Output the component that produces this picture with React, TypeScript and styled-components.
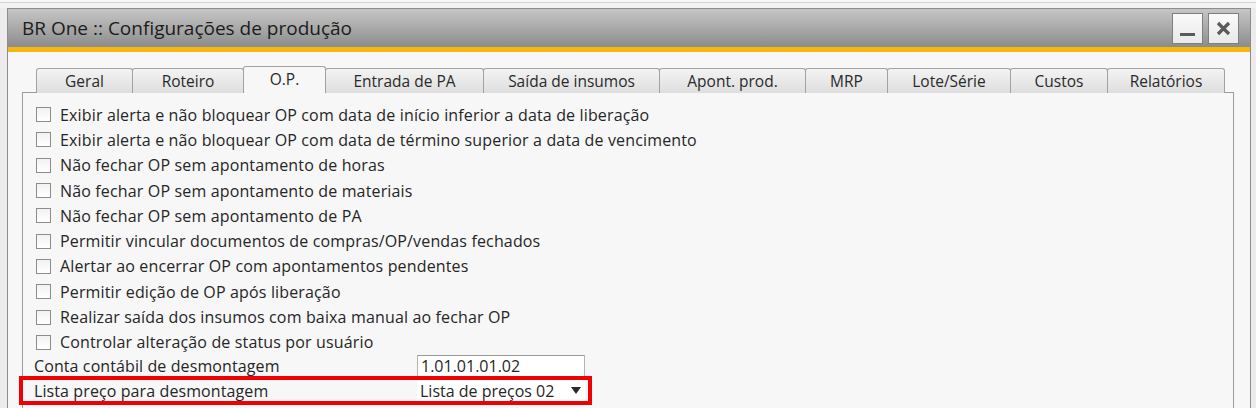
import React from "react";
import styled, { createGlobalStyle } from "styled-components";

const GlobalStyle = createGlobalStyle`
  html, body { margin: 0; padding: 0; }
  body {
    background: #efefef;
    font-family: "Open Sans", "Noto Sans", "DejaVu Sans", sans-serif;
  }
`;

const Page = styled.div`
  width: 1256px;
  height: 408px;
  overflow: hidden;
  box-sizing: border-box;
  padding: 8px 5px 0 7px;
  background: linear-gradient(#f8f8f8 0 2px, #d4d4d4 2px 3px, #f3f3f3 3px 8px, #ececec 8px);
`;

const Window = styled.div`
  height: 400px;
  box-sizing: border-box;
  border: 1px solid #8d8d8d;
  border-bottom: none;
  background: #f7f7f7;
  display: flex;
  flex-direction: column;
  overflow: hidden;
`;

const TitleBar = styled.div`
  height: 43px;
  flex: none;
  box-sizing: border-box;
  display: flex;
  align-items: center;
  justify-content: space-between;
  padding: 0 11px 0 14px;
  background: linear-gradient(#c6c6c6, #8c8c8c);
  border-bottom: 5px solid #f8b613;
`;

const Title = styled.span`
  font-size: 19px;
  color: #1c1c1c;
`;

const WinButtons = styled.div`
  display: flex;
  gap: 5px;
`;

const WinButton = styled.div`
  width: 31px;
  height: 31px;
  box-sizing: border-box;
  border: 1px solid #7f7f7f;
  background: linear-gradient(#fafafa, #e9e9e9);
  display: flex;
  align-items: center;
  justify-content: center;
`;

const Body = styled.div`
  flex: 1;
  display: flex;
  flex-direction: column;
  padding: 14px 16px 0 14px;
  min-height: 0;
`;

const TabStrip = styled.div`
  display: flex;
  align-items: flex-end;
  padding-left: 14px;
  height: 27px;
  margin-bottom: -1px;
  position: relative;
  z-index: 1;
`;

const Tab = styled.div<{ $w: number; $active?: boolean }>`
  width: ${(p) => p.$w + 1}px;
  height: ${(p) => (p.$active ? 27 : 25)}px;
  margin-right: -1px;
  box-sizing: border-box;
  border: 1px solid #a2a2a2;
  border-bottom: none;
  border-radius: 3px 3px 0 0;
  background: ${(p) => (p.$active ? "#f7f7f7" : "linear-gradient(#f3f3f3, #dedede)")};
  display: flex;
  align-items: center;
  justify-content: center;
  padding-bottom: ${(p) => (p.$active ? 2 : 0)}px;
  font-size: 15.5px;
  color: #2a2a2a;
  white-space: nowrap;
  position: relative;
  z-index: ${(p) => (p.$active ? 2 : 1)};
`;

const Panel = styled.div`
  flex: 1;
  border: 1px solid #9b9b9b;
  border-bottom: none;
  background: #f7f7f7;
  display: flex;
  flex-direction: column;
  padding: 9px 0 0 13px;
`;

const CheckRow = styled.label`
  height: 25.3px;
  display: flex;
  align-items: center;
  gap: 9px;
  font-size: 16px;
  letter-spacing: 0.15px;
  color: #262626;
  white-space: nowrap;
`;

const Box = styled.span`
  width: 15px;
  height: 15px;
  box-sizing: border-box;
  border: 1px solid #8c8c8c;
  background: linear-gradient(#f2f2f2, #ffffff);
  flex: none;
`;

const FieldRow = styled.div`
  display: grid;
  grid-template-columns: 383px 168px;
  align-items: center;
  margin-left: -2px;
  height: 23px;
`;

const Label = styled.span`
  font-size: 16px;
  letter-spacing: 0.1px;
  color: #262626;
  white-space: nowrap;
`;

const TextInput = styled.div`
  height: 23px;
  box-sizing: border-box;
  border: 1px solid #b4b4b4;
  border-top-color: #9a9a9a;
  background: #fff;
  padding-left: 3px;
  display: flex;
  align-items: center;
  font-size: 16px;
  color: #262626;
`;

const Highlight = styled.div`
  align-self: flex-start;
  margin: -2px 0 0 -17px;
  border: 4px solid #f00000;
  padding: 0 3px 0 11px;
  display: grid;
  grid-template-columns: 383px 168px;
  align-items: center;
  height: 21px;
  box-sizing: content-box;
`;

const Select = styled.div`
  height: 21px;
  box-sizing: border-box;
  background: #fff;
  padding: 0 4px 0 3px;
  display: flex;
  align-items: center;
  justify-content: space-between;
  font-size: 16px;
  color: #262626;
  white-space: nowrap;
`;

const tabs = [
  { label: "Geral", w: 96 },
  { label: "Roteiro", w: 111 },
  { label: "O.P.", w: 82, active: true },
  { label: "Entrada de PA", w: 158 },
  { label: "Saída de insumos", w: 176 },
  { label: "Apont. prod.", w: 146 },
  { label: "MRP", w: 82 },
  { label: "Lote/Série", w: 123 },
  { label: "Custos", w: 97 },
  { label: "Relatórios", w: 117 },
];

const checks = [
  "Exibir alerta e não bloquear OP com data de início inferior a data de liberação",
  "Exibir alerta e não bloquear OP com data de término superior a data de vencimento",
  "Não fechar OP sem apontamento de horas",
  "Não fechar OP sem apontamento de materiais",
  "Não fechar OP sem apontamento de PA",
  "Permitir vincular documentos de compras/OP/vendas fechados",
  "Alertar ao encerrar OP com apontamentos pendentes",
  "Permitir edição de OP após liberação",
  "Realizar saída dos insumos com baixa manual ao fechar OP",
  "Controlar alteração de status por usuário",
];

export default function App() {
  return (
    <>
      <GlobalStyle />
      <Page>
        <Window>
          <TitleBar>
            <Title>BR One :: Configurações de produção</Title>
            <WinButtons>
              <WinButton>
                <svg width="17" height="17" viewBox="0 0 17 17">
                  <rect x="1" y="13" width="15" height="3" fill="#5a5a5a" />
                </svg>
              </WinButton>
              <WinButton>
                <svg width="17" height="17" viewBox="0 0 17 17">
                  <path d="M3 3 L14 14 M14 3 L3 14" stroke="#5a5a5a" strokeWidth="3.2" />
                </svg>
              </WinButton>
            </WinButtons>
          </TitleBar>
          <Body>
            <TabStrip>
              {tabs.map((t) => (
                <Tab key={t.label} $w={t.w} $active={t.active}>
                  {t.label}
                </Tab>
              ))}
            </TabStrip>
            <Panel>
              {checks.map((c) => (
                <CheckRow key={c}>
                  <Box />
                  {c}
                </CheckRow>
              ))}
              <FieldRow>
                <Label>Conta contábil de desmontagem</Label>
                <TextInput>1.01.01.01.02</TextInput>
              </FieldRow>
              <Highlight>
                <Label>Lista preço para desmontagem</Label>
                <Select>
                  Lista de preços 02
                  <svg width="10" height="7" viewBox="0 0 10 7">
                    <path d="M0 0 H10 L5 7 Z" fill="#2a2a2a" />
                  </svg>
                </Select>
              </Highlight>
            </Panel>
          </Body>
        </Window>
      </Page>
    </>
  );
}
